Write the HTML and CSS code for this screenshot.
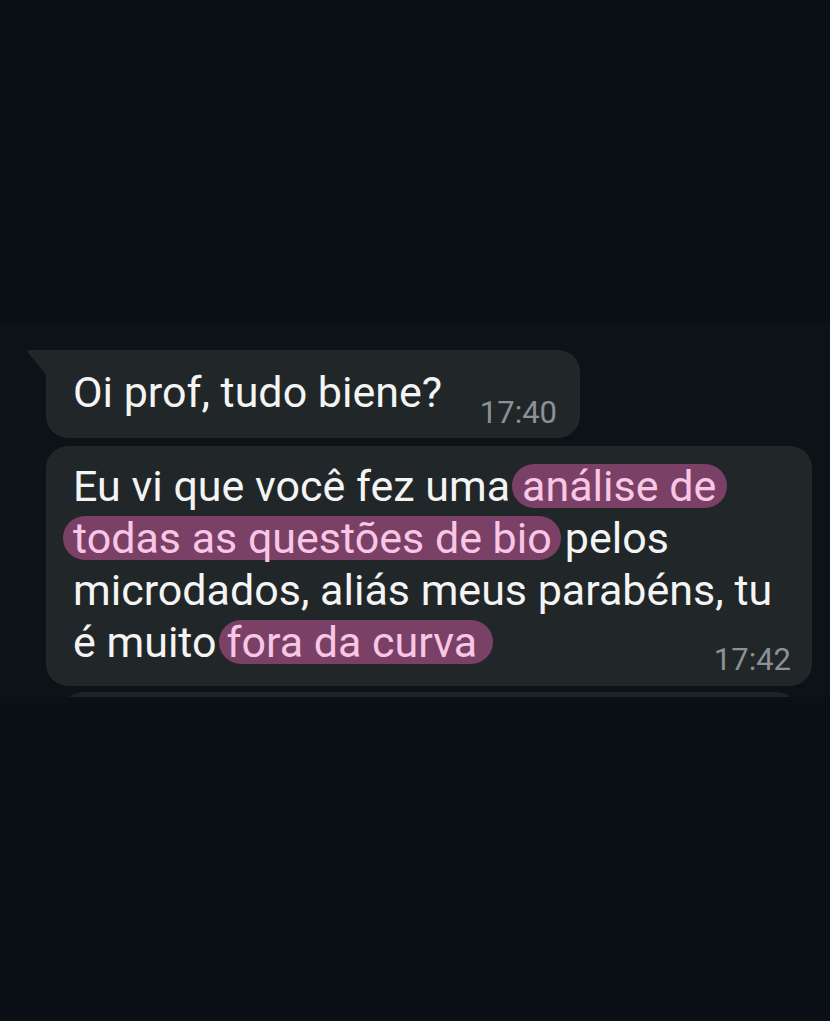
FILE: index.html
```html
<!DOCTYPE html>
<html lang="pt">
<head>
    <meta charset="UTF-8">
    <meta name="viewport" content="width=device-width, initial-scale=1.0">
    <title>Conversa</title>
    <link rel="stylesheet" href="styles.css">
</head>
<body>
    <div class="chat">
        <div class="bubble first">
            <span class="text">Oi prof, tudo biene?</span>
            <span class="time">17:40</span>
        </div>

        <div class="bubble long">
            <p class="text">Eu vi que você fez uma<mark class="start">análise de</mark><br><mark class="wrap">todas as questões de bio</mark>pelos<br>microdados, aliás meus parabéns, tu<br>é muito<mark class="end">fora da curva</mark></p>
            <span class="time">17:42</span>
        </div>

        <div class="bubble next"></div>
    </div>
</body>
</html>
```

FILE: styles.css
```css
body {
    margin: 0;
    padding: 0;
    height: 1021px;
    background-color: #0b0f16;
    font-family: Roboto, "Noto Sans", Arial, sans-serif;
    overflow: hidden;
}

.chat {
    margin-top: 323px;
    height: 374px;
    background-color: #0c1215;
    overflow: hidden;
    display: flex;
    flex-direction: column;
    gap: 8px;
    padding: 27px 18px 0 46px;
    box-sizing: border-box;
}

.bubble {
    position: relative;
    flex-shrink: 0;
    background-color: #212729;
    border-radius: 22px;
    color: #f4f4f4;
    box-sizing: border-box;
}

.first {
    width: 534px;
    height: 88px;
    border-top-left-radius: 0;
    display: flex;
    align-items: flex-start;
    justify-content: space-between;
    padding: 16px 23px 0 27px;
}

/* little tail on the first message */
.first::before {
    content: "";
    position: absolute;
    left: -20px;
    top: 0;
    width: 21px;
    height: 26px;
    background-color: #212729;
    clip-path: polygon(0 0, 100% 0, 100% 100%);
    border-top-left-radius: 4px;
}

.text {
    font-size: 43px;
    line-height: 52px;
}

.time {
    font-size: 31px;
    line-height: 31px;
    color: #8b9195;
}

.first .time {
    margin-top: 31px;
}

.long {
    width: 766px;
    height: 240px;
    padding: 14px 21px 0 27px;
    display: flex;
    flex-direction: column;
}

.long .text {
    margin: 0;
}

.long .time {
    align-self: flex-end;
    margin-top: -24px;
}

/* highlighted passages */
mark {
    display: inline-block;
    line-height: 44px;
    background-color: #7b4066;
    color: #f8c7e6;
    border-radius: 22px;
}

mark.start {
    margin-left: 2px;
    padding: 0 11px 0 10px;
}

mark.wrap {
    margin-left: -10px;
    margin-right: 4px;
    padding: 0 9px 0 10px;
}

mark.end {
    margin-left: 2px;
    padding: 0 16px 0 8px;
}

.next {
    width: 734px;
    height: 40px;
    margin-top: -2px;
    margin-left: 17px;
    background-color: #1d2325;
}
```
